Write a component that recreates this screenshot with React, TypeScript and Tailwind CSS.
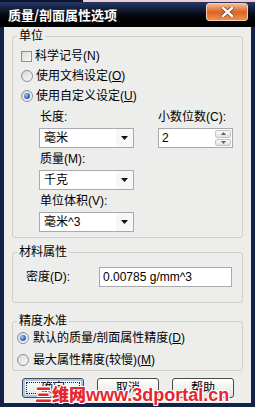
import React from "react";

const Radio = ({ checked = false }: { checked?: boolean }) => (
  <span className="w-[12px] h-[12px] shrink-0 rounded-full border border-[#8b9096] bg-gradient-to-br from-[#d6d6d6] to-[#fbfbfb] flex items-center justify-center">
    {checked && (
      <span className="w-[6px] h-[6px] rounded-full bg-[radial-gradient(circle_at_35%_35%,#a8ccf8,#2e63c2_60%,#16398a)]" />
    )}
  </span>
);

const Key = ({ k }: { k: string }) => (
  <>
    (<span className="underline underline-offset-1">{k}</span>)
  </>
);

const Combo = ({ value }: { value: string }) => (
  <div className="w-[95px] h-[20px] border border-[#a9a9ad] bg-white flex items-center">
    <span className="flex-1 pl-[4px]">{value}</span>
    <span className="w-[17px] h-full flex items-center justify-center bg-[#f7f7f7]">
      <svg width="7" height="4" viewBox="0 0 7 4">
        <path d="M0 0h7L3.5 4z" fill="#101010" />
      </svg>
    </span>
  </div>
);

const Spin = ({ value }: { value: string }) => (
  <div className="w-[75px] h-[20px] border border-[#a9a9ad] bg-white flex items-center">
    <span className="flex-1 pl-[3px]">{value}</span>
    <span className="w-[17px] h-full flex flex-col gap-[1px] py-[1px] pr-[1px]">
      <span className="flex-1 rounded-[2px] border border-[#c3c3c3] bg-gradient-to-b from-[#fafafa] to-[#e2e2e2] flex items-center justify-center">
        <svg width="5" height="3" viewBox="0 0 5 3">
          <path d="M0 3h5L2.5 0z" fill="#5a6070" />
        </svg>
      </span>
      <span className="flex-1 rounded-[2px] border border-[#c3c3c3] bg-gradient-to-b from-[#fafafa] to-[#e2e2e2] flex items-center justify-center">
        <svg width="5" height="3" viewBox="0 0 5 3">
          <path d="M0 0h5L2.5 3z" fill="#5a6070" />
        </svg>
      </span>
    </span>
  </div>
);

const Button = ({ label, focused = false }: { label: string; focused?: boolean }) => (
  <button
    className={
      focused
        ? "relative w-[62px] h-[20px] rounded-[3px] border border-[#4a4a4a] bg-gradient-to-b from-white to-[#e4e4de] shadow-[inset_0_0_0_2px_#a6c5f2] flex items-center justify-center"
        : "relative w-[62px] h-[20px] rounded-[3px] border border-[#4a4a4a] bg-gradient-to-b from-white to-[#e4e4de] flex items-center justify-center"
    }
  >
    {focused && <span className="absolute inset-[3px] border border-dotted border-[#222]" />}
    {label}
  </button>
);

export default function App() {
  return (
    <div className="relative w-[255px] h-[407px] flex flex-col text-[12px] leading-[14px] text-black font-['Liberation_Sans','Noto_Sans_CJK_SC',sans-serif]">
      {/* title bar */}
      <div className="h-[27px] flex flex-col">
        <div className="h-[2px] flex">
          <div className="w-[83px] bg-[#0d1528]" />
          <div className="flex-1 bg-[#f2cdd0]" />
        </div>
        <div className="flex-1 flex bg-gradient-to-b from-[#26396a] via-[#070c18] to-[#000000]">
          <span className="self-center pl-[8px] text-white font-bold text-[13px] font-['Noto_Sans_CJK_SC',sans-serif]">
            质量/剖面属性选项
          </span>
          <div className="flex-1" />
          <div className="mt-[1px] mr-[7px] w-[42px] h-[18px] rounded-[3px] border border-[#f6d0b4] bg-gradient-to-b from-[#f2b98e] via-[#db6322] to-[#f28f4c] flex items-center justify-center">
            <svg width="13" height="10" viewBox="0 0 13 10">
              <path d="M2 1l9 8M11 1l-9 8" stroke="#7a4a30" strokeWidth="4" strokeLinecap="square" />
              <path d="M2 1l9 8M11 1l-9 8" stroke="#ffffff" strokeWidth="2.4" strokeLinecap="square" />
            </svg>
          </div>
        </div>
      </div>

      {/* frame */}
      <div className="flex-1 flex px-[4px] pb-[4px] bg-[#132347]">
        <div className="flex-1 flex flex-col px-[8px] bg-[#ededeb]">
          {/* 单位 */}
          <fieldset className="mt-[2px] border border-[#d0d0c8] rounded-[3px]">
            <legend className="ml-[4px] px-[2px] leading-[14px]">单位</legend>
            <div className="pt-[3px] pl-[8px] pb-[5px]">
              <div className="h-5 flex items-center gap-[3px]">
                <span className="w-[11px] h-[11px] border border-[#8e8f8f] bg-gradient-to-br from-[#d8d8d3] to-[#fbfbfb]" />
                <span>科学记号(N)</span>
              </div>
              <div className="h-5 flex items-center gap-[3px]">
                <Radio />
                <span>
                  使用文档设定<Key k="O" />
                </span>
              </div>
              <div className="h-5 flex items-center gap-[3px]">
                <Radio checked />
                <span>
                  使用自定义设定<Key k="U" />
                </span>
              </div>
              <div className="ml-[18px] mt-[4px] grid grid-cols-[95px_75px] gap-x-[24px]">
                <div className="flex flex-col">
                  <span className="pl-[1px]">长度:</span>
                  <div className="mt-[4px]">
                    <Combo value="毫米" />
                  </div>
                  <span className="mt-[4px] pl-[1px]">质量(M):</span>
                  <div className="mt-[4px]">
                    <Combo value="千克" />
                  </div>
                  <span className="mt-[4px] pl-[1px]">单位体积(V):</span>
                  <div className="mt-[4px]">
                    <Combo value="毫米^3" />
                  </div>
                </div>
                <div className="flex flex-col">
                  <span>小数位数(C):</span>
                  <div className="mt-[4px]">
                    <Spin value="2" />
                  </div>
                </div>
              </div>
            </div>
          </fieldset>

          {/* 材料属性 */}
          <fieldset className="mt-[7px] border border-[#d0d0c8] rounded-[3px]">
            <legend className="ml-[4px] px-[2px] leading-[14px]">材料属性</legend>
            <div className="pt-[8px] pb-[15px] pl-[13px] flex items-center">
              <span className="w-[73px]">密度(D):</span>
              <div className="w-[133px] h-[20px] border border-[#a9a9ad] bg-white flex items-center pl-[3px]">
                0.00785 g/mm^3
              </div>
            </div>
          </fieldset>

          {/* 精度水准 */}
          <fieldset className="mt-[11px] border border-[#d0d0c8] rounded-[3px]">
            <legend className="ml-[4px] px-[2px] leading-[14px]">精度水准</legend>
            <div className="pl-[4px]">
              <div className="h-[19px] flex items-center gap-[4px]">
                <Radio checked />
                <span>
                  默认的质量/剖面属性精度<Key k="D" />
                </span>
              </div>
              <div className="mt-[3px] h-[20px] flex items-center gap-[4px]">
                <Radio />
                <span>
                  最大属性精度(较慢)<Key k="M" />
                </span>
              </div>
            </div>
          </fieldset>

          <div className="mt-[7px] ml-[10px] flex gap-[13px]">
            <Button label="确定" focused />
            <Button label="取消" />
            <Button label="帮助" />
          </div>
        </div>
      </div>

      {/* watermark */}
      <div className="absolute left-[35px] top-[384px] flex items-baseline text-[#e3262f] [text-shadow:1px_1px_0_#fff,-1px_-1px_0_#fff,1px_-1px_0_#fff,-1px_1px_0_#fff,0_1px_0_#fff,1px_0_0_#fff,0_-1px_0_#fff,-1px_0_0_#fff]">
        <span className="text-[17px] leading-[20px] font-black font-['Noto_Sans_CJK_SC',sans-serif]">三维网</span>
        <span className="text-[18px] leading-[20px] font-bold font-['Liberation_Sans',sans-serif]">www.3dportal.cn</span>
      </div>
    </div>
  );
}
